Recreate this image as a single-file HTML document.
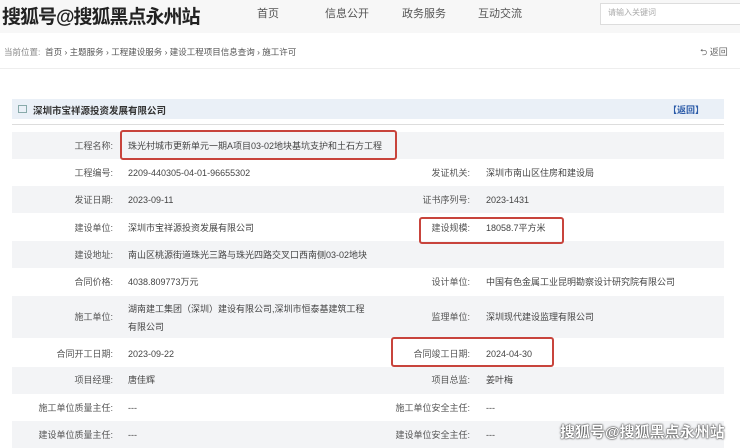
<!DOCTYPE html>
<html><head><meta charset="utf-8"><style>
body{margin:0;width:740px;height:448px;overflow:hidden;background:#fff;font-family:"Liberation Sans","Noto Sans CJK SC",sans-serif;color:#444;position:relative}
.a{position:absolute;white-space:nowrap}
.band{position:absolute;left:12px;width:712px;background:#f3f4f6}
.l{position:absolute;font-size:9px;line-height:12px;color:#555;text-align:right;white-space:nowrap}
.v{position:absolute;font-size:9px;line-height:12px;color:#444;white-space:nowrap}
.box{position:absolute;border:2px solid #c8443c;border-radius:3px}
</style></head><body>
<div class="a" style="left:0;top:0;width:740px;height:33px;background:#f7f7f7"></div>
<div class="a" style="left:2px;top:2px;font-size:19px;font-weight:bold;color:#222;letter-spacing:-1px">搜狐号@搜狐黑点永州站</div>
<div class="a" style="left:257px;top:5px;font-size:11px;color:#555">首页</div>
<div class="a" style="left:325px;top:5px;font-size:11px;color:#555">信息公开</div>
<div class="a" style="left:402px;top:5px;font-size:11px;color:#555">政务服务</div>
<div class="a" style="left:478px;top:5px;font-size:11px;color:#555">互动交流</div>
<div class="a" style="left:600px;top:3px;width:145px;height:20px;background:#fff;border:1px solid #ddd"></div>
<div class="a" style="left:608px;top:7px;font-size:8px;color:#aaa">请输入关键词</div>
<div class="a" style="left:4px;top:46px;font-size:8.5px;color:#888">当前位置: &nbsp;<span style="color:#555">首页 › 主题服务 › 工程建设服务 › 建设工程项目信息查询 › 施工许可</span></div>
<div class="a" style="left:700px;top:45px;font-size:9px;color:#666">⮌ 返回</div>
<div class="a" style="left:0;top:68px;width:740px;height:1px;background:#eee"></div>
<div class="a" style="left:12px;top:99px;width:712px;height:20px;background:#eaf0f7"></div>
<div class="a" style="left:18px;top:105px;width:7px;height:6px;border:1px solid #8aa"></div>
<div class="a" style="left:33px;top:103px;font-size:9.5px;font-weight:bold;color:#333">深圳市宝祥源投资发展有限公司</div>
<div class="a" style="left:668px;top:103px;font-size:9px;font-weight:bold;color:#2a5aa8">【返回】</div>
<div class="a" style="left:12px;top:124px;width:712px;height:1px;background:#ddd"></div>

<div class="band" style="top:132px;height:27px"></div>
<div class="band" style="top:186px;height:27px"></div>
<div class="band" style="top:241px;height:27px"></div>
<div class="band" style="top:296px;height:42px"></div>
<div class="band" style="top:367px;height:27px"></div>
<div class="band" style="top:421px;height:27px"></div>

<div class="l" style="right:627px;top:140px">工程名称:</div><div class="v" style="left:128px;top:140px">珠光村城市更新单元一期A项目03-02地块基坑支护和土石方工程</div>
<div class="l" style="right:627px;top:167px">工程编号:</div><div class="v" style="left:128px;top:167px">2209-440305-04-01-96655302</div>
<div class="l" style="right:270px;top:167px">发证机关:</div><div class="v" style="left:486px;top:167px">深圳市南山区住房和建设局</div>
<div class="l" style="right:627px;top:194px">发证日期:</div><div class="v" style="left:128px;top:194px">2023-09-11</div>
<div class="l" style="right:270px;top:194px">证书序列号:</div><div class="v" style="left:486px;top:194px">2023-1431</div>
<div class="l" style="right:627px;top:222px">建设单位:</div><div class="v" style="left:128px;top:222px">深圳市宝祥源投资发展有限公司</div>
<div class="l" style="right:270px;top:222px">建设规模:</div><div class="v" style="left:486px;top:222px">18058.7平方米</div>
<div class="l" style="right:627px;top:249px">建设地址:</div><div class="v" style="left:128px;top:249px">南山区桃源街道珠光三路与珠光四路交叉口西南侧03-02地块</div>
<div class="l" style="right:627px;top:276px">合同价格:</div><div class="v" style="left:128px;top:276px">4038.809773万元</div>
<div class="l" style="right:270px;top:276px">设计单位:</div><div class="v" style="left:486px;top:276px">中国有色金属工业昆明勘察设计研究院有限公司</div>
<div class="l" style="right:627px;top:311px">施工单位:</div><div class="v" style="left:128px;top:300px;line-height:18px">湖南建工集团（深圳）建设有限公司,深圳市恒泰基建筑工程<br>有限公司</div>
<div class="l" style="right:270px;top:311px">监理单位:</div><div class="v" style="left:486px;top:311px">深圳现代建设监理有限公司</div>
<div class="l" style="right:627px;top:348px">合同开工日期:</div><div class="v" style="left:128px;top:348px">2023-09-22</div>
<div class="l" style="right:270px;top:348px">合同竣工日期:</div><div class="v" style="left:486px;top:348px">2024-04-30</div>
<div class="l" style="right:627px;top:374px">项目经理:</div><div class="v" style="left:128px;top:374px">唐佳辉</div>
<div class="l" style="right:270px;top:374px">项目总监:</div><div class="v" style="left:486px;top:374px">姜叶梅</div>
<div class="l" style="right:627px;top:402px">施工单位质量主任:</div><div class="v" style="left:128px;top:402px">---</div>
<div class="l" style="right:270px;top:402px">施工单位安全主任:</div><div class="v" style="left:486px;top:402px">---</div>
<div class="l" style="right:627px;top:429px">建设单位质量主任:</div><div class="v" style="left:128px;top:429px">---</div>
<div class="l" style="right:270px;top:429px">建设单位安全主任:</div><div class="v" style="left:486px;top:429px">---</div>

<div class="box" style="left:120px;top:130px;width:273px;height:26px"></div>
<div class="box" style="left:419px;top:217px;width:141px;height:23px"></div>
<div class="box" style="left:391px;top:337px;width:159px;height:26px"></div>

<div class="a" style="left:560px;top:421px;font-size:15px;font-weight:bold;color:#fff;text-shadow:0 0 2px #333,0 0 1px #000">搜狐号@搜狐黑点永州站</div>
</body></html>
